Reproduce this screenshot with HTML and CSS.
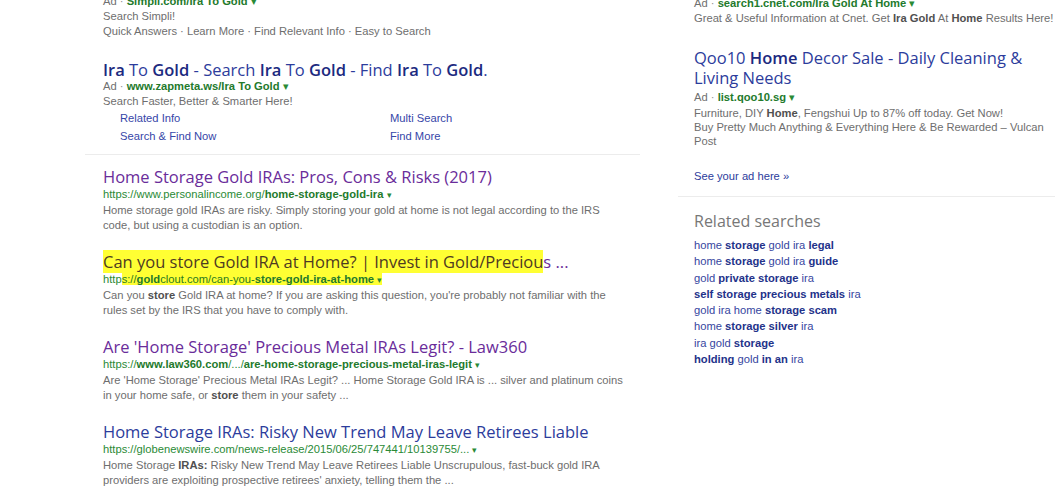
FILE: index.html
```html
<!DOCTYPE html>
<html>
<head>
<meta charset="utf-8">
<link rel="stylesheet" href="styles.css">
</head>
<body>
<div class="page">
  <div class="main">
    <div class="block top">
      <div class="url"><span class="ad">Ad</span> <span class="dot">·</span> <b>Simpli.com/Ira To Gold</b> <span class="caret">▾</span></div>
      <div class="desc">Search Simpli!</div>
      <div class="desc">Quick Answers · Learn More · Find Relevant Info · Easy to Search</div>
    </div>
    <div class="block ad2">
      <div class="title"><b>Ira</b> To <b>Gold</b> - Search <b>Ira</b> To <b>Gold</b> - Find <b>Ira</b> To <b>Gold</b>.</div>
      <div class="url"><span class="ad">Ad</span> <span class="dot">·</span> <b>www.zapmeta.ws/Ira To Gold</b> <span class="caret">▾</span></div>
      <div class="desc">Search Faster, Better &amp; Smarter Here!</div>
      <div class="sitelinks">
        <span>Related Info</span><span>Multi Search</span>
        <span>Search &amp; Find Now</span><span>Find More</span>
      </div>
    </div>
    <div class="sep"></div>
    <div class="result">
      <div class="title visited">Home Storage Gold IRAs: Pros, Cons &amp; Risks (2017)</div>
      <div class="url">https://www.personalincome.org/<b>home-storage-gold-ira</b> <span class="caret sm">▾</span></div>
      <div class="desc">Home storage gold IRAs are risky. Simply storing your gold at home is not legal according to the IRS code, but using a custodian is an option.</div>
    </div>
    <div class="result">
      <div class="title visited"><span class="hl">Can you store Gold IRA at Home? | Invest in Gold/Preciou</span>s ...</div>
      <div class="url">http<span class="hl">s://<b>gold</b>clout.com/can-you-<b>store-gold-ira-at-home</b> <span class="caret sm">▾</span></span></div>
      <div class="desc">Can you <b>store</b> Gold IRA at home? If you are asking this question, you're probably not familiar with the rules set by the IRS that you have to comply with.</div>
    </div>
    <div class="result">
      <div class="title visited">Are 'Home Storage' Precious Metal IRAs Legit? - Law360</div>
      <div class="url">https://<b>www.law360.com</b>/.../<b>are-home-storage-precious-metal-iras-legit</b> <span class="caret sm">▾</span></div>
      <div class="desc">Are 'Home Storage' Precious Metal IRAs Legit? ... Home Storage Gold IRA is ... silver and platinum coins in your home safe, or <b>store</b> them in your safety ...</div>
    </div>
    <div class="result">
      <div class="title">Home Storage IRAs: Risky New Trend May Leave Retirees Liable</div>
      <div class="url">https://globenewswire.com/news-release/2015/06/25/747441/10139755/... <span class="caret sm">▾</span></div>
      <div class="desc">Home Storage <b>IRAs:</b> Risky New Trend May Leave Retirees Liable Unscrupulous, fast-buck gold IRA providers are exploiting prospective retirees' anxiety, telling them the ...</div>
    </div>
  </div>
  <div class="side">
    <div class="block top">
      <div class="url"><span class="ad">Ad</span> <span class="dot">·</span> <b>search1.cnet.com/Ira Gold At Home</b> <span class="caret">▾</span></div>
      <div class="desc">Great &amp; Useful Information at Cnet. Get <b>Ira Gold</b> At <b>Home</b> Results Here!</div>
    </div>
    <div class="block qoo">
      <div class="title two">Qoo10 <b>Home</b> Decor Sale - Daily Cleaning &amp; Living Needs</div>
      <div class="url"><span class="ad">Ad</span> <span class="dot">·</span> <b>list.qoo10.sg</b> <span class="caret">▾</span></div>
      <div class="desc">Furniture, DIY <b>Home</b>, Fengshui Up to 87% off today. Get Now!</div>
      <div class="desc">Buy Pretty Much Anything &amp; Everything Here &amp; Be Rewarded – Vulcan Post</div>
    </div>
    <div class="seead">See your ad here »</div>
    <div class="sep side-sep"></div>
    <div class="related">
      <div class="rel-title">Related searches</div>
      <ul class="rel-list">
        <li>home <b>storage</b> gold ira <b>legal</b></li>
        <li>home <b>storage</b> gold ira <b>guide</b></li>
        <li>gold <b>private storage</b> ira</li>
        <li><b>self storage precious metals</b> ira</li>
        <li>gold ira home <b>storage scam</b></li>
        <li>home <b>storage silver</b> ira</li>
        <li>ira gold <b>storage</b></li>
        <li><b>holding</b> gold <b>in an</b> ira</li>
      </ul>
    </div>
  </div>
</div>
</body>
</html>
```

FILE: styles.css
```css
html, body {
  margin: 0;
  padding: 0;
  background: #ffffff;
}
body {
  font-family: "Liberation Sans", Arial, sans-serif;
  font-size: 11.2px;
  color: #6a6a6a;
  overflow: hidden;
}
.page {
  display: flex;
  align-items: flex-start;
  margin-top: -6px;
}
.main {
  width: 555px;
  margin-left: 85px;
  display: flex;
  flex-direction: column;
}
.main > .block, .main > .result {
  padding-left: 18px;
}
.side {
  width: 377px;
  margin-left: 38px;
  display: flex;
  flex-direction: column;
}
.side > .block, .side > .seead, .side > .related {
  padding-left: 16px;
}
.title {
  font-family: "Open Sans", "Noto Sans", sans-serif;
  font-size: 16.5px;
  line-height: 19px;
  color: #2c3c9c;
  white-space: nowrap;
}
.title b {
  font-weight: 600;
  color: #1c2a80;
}
.title.two {
  white-space: normal;
  width: 350px;
  line-height: 20px;
}
.title.visited {
  color: #6a2c9a;
}
.url {
  line-height: 15px;
  color: #2a8a36;
  white-space: nowrap;
}
.url b {
  color: #237a2c;
}
.ad {
  color: #707070;
}
.dot {
  color: #909090;
}
.caret {
  font-size: 11px;
  color: #2a8a36;
}
.caret.sm {
  font-size: 9px;
}
.desc {
  line-height: 15px;
  color: #6e6e6e;
}
.desc b {
  color: #505050;
}
.block.ad2 {
  margin-top: 21px;
}
.sitelinks {
  display: grid;
  grid-template-columns: 270px auto;
  padding-left: 17px;
  row-gap: 3px;
  margin-top: 2px;
  color: #3646a8;
  line-height: 15px;
}
.sep {
  height: 1px;
  background: #ececec;
  margin-top: 10px;
}
.result {
  margin-top: 12px;
}
.result + .result {
  margin-top: 19px;
}
.result .url {
  margin-top: 1px;
}
.result .desc {
  width: 524px;
}
.side .block.top {
  margin-top: 2px;
}
.block.qoo {
  margin-top: 22px;
}
.qoo .url {
  margin-top: 2px;
}
.qoo .desc {
  line-height: 14px;
  width: 360px;
}
.qoo .url + .desc {
  margin-top: 1px;
}
.seead {
  margin-top: 21px;
  color: #2c3c9c;
  line-height: 15px;
}
.side-sep {
  margin-top: 12px;
}
.related {
  margin-top: 13px;
}
.rel-title {
  font-family: "Open Sans", "Noto Sans", sans-serif;
  font-size: 16px;
  line-height: 22px;
  color: #777777;
}
.rel-list {
  list-style: none;
  margin: 5px 0 0 0;
  padding: 0;
  line-height: 16.3px;
  color: #3646a0;
}
.rel-list b {
  color: #23328a;
}
.hl {
  background: #ffff33;
  color: #4e3a22;
}
.url .hl {
  color: #2a7a20;
}
```
